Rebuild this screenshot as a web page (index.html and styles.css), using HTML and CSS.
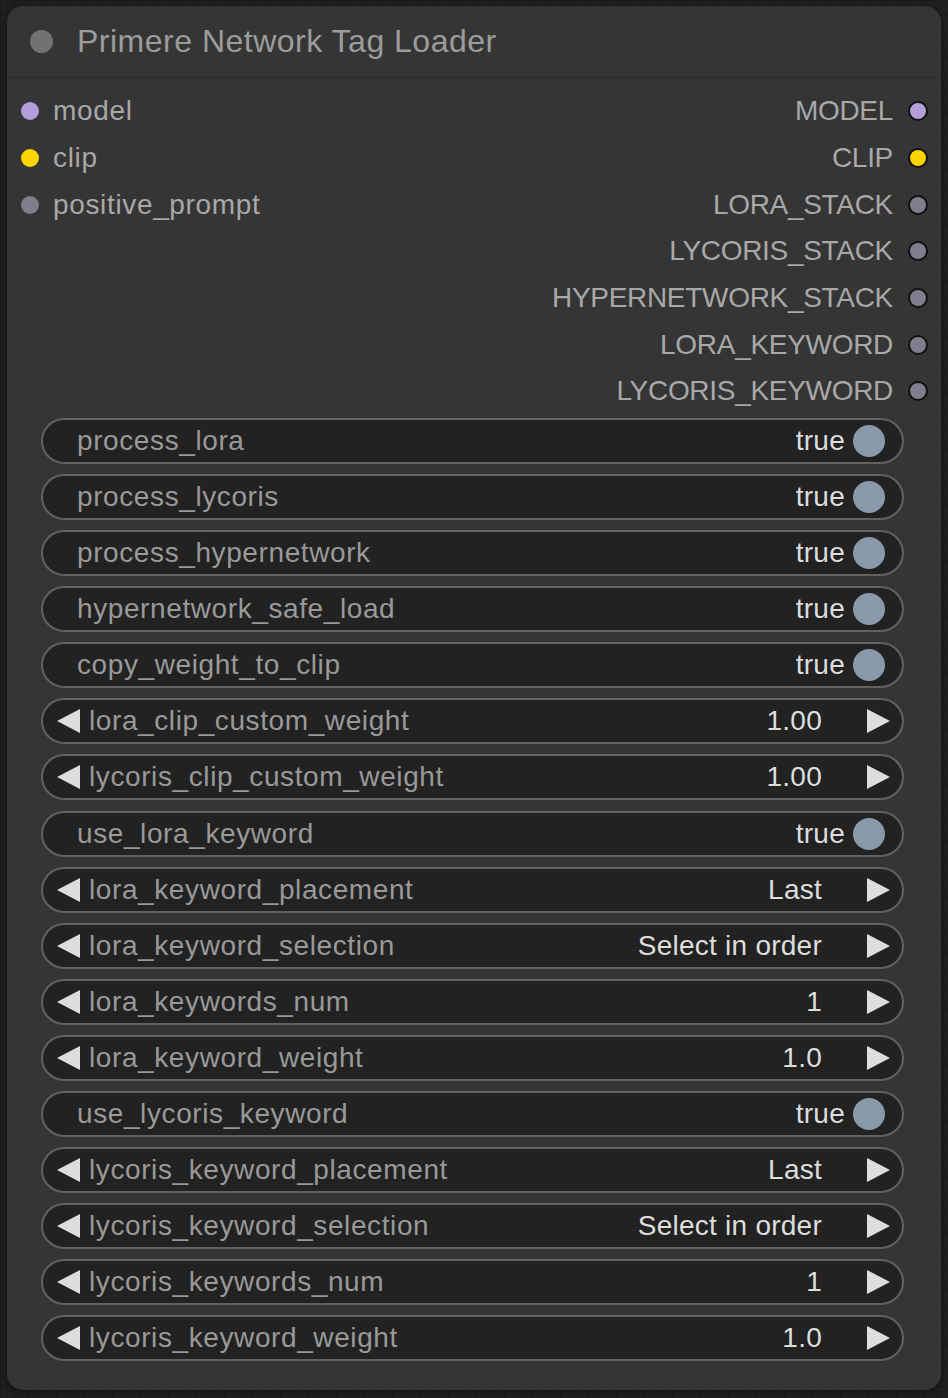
FILE: index.html
```html
<!DOCTYPE html>
<html>
<head>
<meta charset="utf-8">
<link rel="stylesheet" href="styles.css">
</head>
<body>
<div class="node">
  <div class="title">
    <span class="title-dot"></span>
    <span class="title-text">Primere Network Tag Loader</span>
  </div>
  <div class="slots">
    <div class="slot-row"><div class="in"><span class="dot model"></span>model</div><div class="out">MODEL<span class="odot model"></span></div></div>
    <div class="slot-row"><div class="in"><span class="dot clip"></span>clip</div><div class="out">CLIP<span class="odot clip"></span></div></div>
    <div class="slot-row"><div class="in"><span class="dot gray"></span>positive_prompt</div><div class="out">LORA_STACK<span class="odot gray"></span></div></div>
    <div class="slot-row"><div class="in"></div><div class="out">LYCORIS_STACK<span class="odot gray"></span></div></div>
    <div class="slot-row"><div class="in"></div><div class="out">HYPERNETWORK_STACK<span class="odot gray"></span></div></div>
    <div class="slot-row"><div class="in"></div><div class="out">LORA_KEYWORD<span class="odot gray"></span></div></div>
    <div class="slot-row"><div class="in"></div><div class="out">LYCORIS_KEYWORD<span class="odot gray"></span></div></div>
  </div>
  <div class="widgets">
    <div class="w toggle"><span class="label">process_lora</span><span class="val">true</span><span class="knob"></span></div>
    <div class="w toggle"><span class="label">process_lycoris</span><span class="val">true</span><span class="knob"></span></div>
    <div class="w toggle"><span class="label">process_hypernetwork</span><span class="val">true</span><span class="knob"></span></div>
    <div class="w toggle"><span class="label">hypernetwork_safe_load</span><span class="val">true</span><span class="knob"></span></div>
    <div class="w toggle"><span class="label">copy_weight_to_clip</span><span class="val">true</span><span class="knob"></span></div>
    <div class="w num"><svg class="arr" viewBox="0 0 23 24"><polygon points="23,0 23,24 0,12"/></svg><span class="label">lora_clip_custom_weight</span><span class="val">1.00</span><svg class="arr r" viewBox="0 0 23 24"><polygon points="0,0 0,24 23,12"/></svg></div>
    <div class="w num"><svg class="arr" viewBox="0 0 23 24"><polygon points="23,0 23,24 0,12"/></svg><span class="label">lycoris_clip_custom_weight</span><span class="val">1.00</span><svg class="arr r" viewBox="0 0 23 24"><polygon points="0,0 0,24 23,12"/></svg></div>
    <div class="w toggle"><span class="label">use_lora_keyword</span><span class="val">true</span><span class="knob"></span></div>
    <div class="w num"><svg class="arr" viewBox="0 0 23 24"><polygon points="23,0 23,24 0,12"/></svg><span class="label">lora_keyword_placement</span><span class="val">Last</span><svg class="arr r" viewBox="0 0 23 24"><polygon points="0,0 0,24 23,12"/></svg></div>
    <div class="w num"><svg class="arr" viewBox="0 0 23 24"><polygon points="23,0 23,24 0,12"/></svg><span class="label">lora_keyword_selection</span><span class="val">Select in order</span><svg class="arr r" viewBox="0 0 23 24"><polygon points="0,0 0,24 23,12"/></svg></div>
    <div class="w num"><svg class="arr" viewBox="0 0 23 24"><polygon points="23,0 23,24 0,12"/></svg><span class="label">lora_keywords_num</span><span class="val">1</span><svg class="arr r" viewBox="0 0 23 24"><polygon points="0,0 0,24 23,12"/></svg></div>
    <div class="w num"><svg class="arr" viewBox="0 0 23 24"><polygon points="23,0 23,24 0,12"/></svg><span class="label">lora_keyword_weight</span><span class="val">1.0</span><svg class="arr r" viewBox="0 0 23 24"><polygon points="0,0 0,24 23,12"/></svg></div>
    <div class="w toggle"><span class="label">use_lycoris_keyword</span><span class="val">true</span><span class="knob"></span></div>
    <div class="w num"><svg class="arr" viewBox="0 0 23 24"><polygon points="23,0 23,24 0,12"/></svg><span class="label">lycoris_keyword_placement</span><span class="val">Last</span><svg class="arr r" viewBox="0 0 23 24"><polygon points="0,0 0,24 23,12"/></svg></div>
    <div class="w num"><svg class="arr" viewBox="0 0 23 24"><polygon points="23,0 23,24 0,12"/></svg><span class="label">lycoris_keyword_selection</span><span class="val">Select in order</span><svg class="arr r" viewBox="0 0 23 24"><polygon points="0,0 0,24 23,12"/></svg></div>
    <div class="w num"><svg class="arr" viewBox="0 0 23 24"><polygon points="23,0 23,24 0,12"/></svg><span class="label">lycoris_keywords_num</span><span class="val">1</span><svg class="arr r" viewBox="0 0 23 24"><polygon points="0,0 0,24 23,12"/></svg></div>
    <div class="w num"><svg class="arr" viewBox="0 0 23 24"><polygon points="23,0 23,24 0,12"/></svg><span class="label">lycoris_keyword_weight</span><span class="val">1.0</span><svg class="arr r" viewBox="0 0 23 24"><polygon points="0,0 0,24 23,12"/></svg></div>
  </div>
</div>
</body>
</html>
```
FILE: styles.css
```css
html, body {
  margin: 0;
  padding: 0;
}
body {
  width: 948px;
  height: 1398px;
  overflow: hidden;
  background-color: #202020;
  background-image:
    linear-gradient(to right, #1a1a1a 1px, transparent 1px),
    linear-gradient(to bottom, #1a1a1a 1px, transparent 1px);
  background-size: 14px 14px;
  font-family: "Liberation Sans", Arial, sans-serif;
  padding-top: 6px;
  padding-left: 7px;
  box-sizing: border-box;
}
.node {
  width: 934px;
  height: 1384px;
  background: #353535;
  border-radius: 16px;
  box-shadow: 0 2px 8px rgba(0,0,0,0.5);
  box-sizing: border-box;
}
.title {
  height: 72px;
  box-sizing: border-box;
  border-bottom: 1px solid #2b2b2b;
  display: flex;
  align-items: center;
  padding-left: 23px;
  padding-bottom: 1px;
}
.title-dot {
  width: 23px;
  height: 23px;
  border-radius: 50%;
  background: #727272;
  flex: none;
}
.title-text {
  margin-left: 24px;
  font-size: 32px;
  color: #9c9c9c;
  letter-spacing: 0.5px;
}
.slots {
  padding-top: 10px;
}
.slot-row {
  height: 46.67px;
  display: flex;
  align-items: center;
  justify-content: space-between;
  font-size: 28px;
  color: #a8a8a8;
}
.in {
  display: flex;
  align-items: center;
  gap: 14px;
  padding-left: 14px;
  letter-spacing: 0.65px;
}
.out {
  display: flex;
  align-items: center;
  gap: 15px;
  padding-right: 13px;
  letter-spacing: -0.3px;
}
.dot {
  width: 18px;
  height: 18px;
  border-radius: 50%;
  flex: none;
}
.odot {
  width: 20px;
  height: 20px;
  border-radius: 50%;
  border: 2px solid #111;
  box-sizing: border-box;
  flex: none;
}
.model { background: #b39ddb; }
.clip { background: #ffd500; }
.gray { background: #7e7e8c; }
.widgets {
  margin-top: 3.3px;
  padding: 0 37px 0 34px;
  display: flex;
  flex-direction: column;
  gap: 10.1px;
}
.w {
  height: 46px;
  box-sizing: border-box;
  border: 2px solid #626262;
  border-radius: 23px;
  background: #222222;
  display: flex;
  align-items: center;
  font-size: 28px;
}
.label {
  color: #999999;
  flex: 1;
  white-space: nowrap;
  letter-spacing: 0.6px;
}
.val {
  color: #dddddd;
  white-space: nowrap;
  letter-spacing: 0.25px;
}
.toggle {
  padding-left: 34px;
  padding-right: 17px;
}
.knob {
  width: 32px;
  height: 32px;
  border-radius: 50%;
  background: #8899aa;
  margin-left: 8px;
  flex: none;
}
.num {
  padding-left: 14px;
  padding-right: 12px;
}
.arr {
  width: 23px;
  height: 24px;
  fill: #dddddd;
  flex: none;
}
.num .label {
  margin-left: 9px;
}
.arr.r {
  margin-left: 45px;
}
```
